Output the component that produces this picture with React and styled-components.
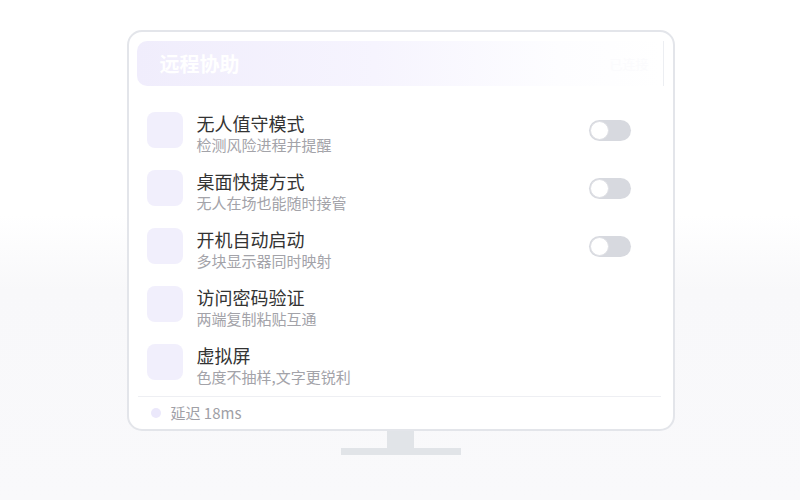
import React from 'react';
import styled, { createGlobalStyle } from 'styled-components';

const Global = createGlobalStyle`
    html, body {
        margin: 0;
        padding: 0;
    }
    body {
        width: 800px;
        height: 500px;
        overflow: hidden;
        font-family: "Noto Sans CJK SC", "Noto Sans", sans-serif;
        background: linear-gradient(180deg, #ffffff 0px, #ffffff 215px, #f8f8fa 290px, #f9f9fb 500px);
    }
`

const Stage = styled.div`
    display: flex;
    flex-direction: column;
    align-items: center;
    padding-top: 30px;
    padding-left: 1px;
`

const Screen = styled.div`
    box-sizing: border-box;
    width: 548px;
    height: 401px;
    border: 2px solid #e3e5ea;
    border-radius: 15px;
    background: #ffffff;
    padding: 9px 9px 0 8px;
    display: flex;
    flex-direction: column;
`

const Header = styled.div`
    height: 45px;
    border-radius: 10px 0 0 10px;
    background: linear-gradient(90deg, #f0edfc 0%, #f6f4fe 45%, #fdfdff 80%, #ffffff 100%);
    border-right: 1px solid #eceef2;
    display: flex;
    align-items: center;
    justify-content: space-between;
    padding: 0 14px 0 23px;
`

const Titulo = styled.span`
    color: #ffffff;
    font-size: 20px;
    font-weight: 700;
`

const Status = styled.span`
    color: #fbfbfd;
    font-size: 13px;
`

const Lista = styled.div`
    display: flex;
    flex-direction: column;
    padding-top: 15px;
`

const Linha = styled.div`
    height: 58px;
    display: flex;
    align-items: center;
    padding: 0 33px 0 10px;
`

const Icone = styled.div`
    width: 36px;
    height: 36px;
    border-radius: 8px;
    background: #f1effc;
    flex-shrink: 0;
`

const Textos = styled.div`
    flex: 1;
    display: flex;
    flex-direction: column;
    margin-left: 14px;
    margin-top: 5px;
`

const Nome = styled.span`
    font-size: 18px;
    line-height: 24px;
    color: #333333;
`

const Descricao = styled.span`
    font-size: 15px;
    line-height: 20px;
    color: #a3a3a9;
`

const Trilho = styled.div`
    box-sizing: border-box;
    width: 42px;
    height: 21px;
    border-radius: 11px;
    background: #d7d9df;
    padding: 1px;
    display: flex;
    align-items: center;
`

const Bolinha = styled.div`
    box-sizing: border-box;
    width: 19px;
    height: 19px;
    border-radius: 50%;
    background: #ffffff;
    border: 1.5px solid #dfe0e5;
`

const Divisor = styled.div`
    height: 1px;
    background: #eeeff3;
    margin: 5px 3px 0 1px;
`

const Rodape = styled.div`
    height: 31px;
    display: flex;
    align-items: center;
    padding-left: 14px;
    gap: 10px;
`

const Ponto = styled.div`
    width: 10px;
    height: 10px;
    border-radius: 50%;
    background: #ebe8fb;
`

const Latencia = styled.span`
    font-size: 15px;
    color: #a0a0a6;
`

const Pescoco = styled.div`
    width: 27px;
    height: 17px;
    background: #e1e4e8;
`

const Base = styled.div`
    width: 120px;
    height: 7px;
    background: #e1e4e8;
`

const itens = [
    { nome: '无人值守模式', desc: '检测风险进程并提醒', toggle: true },
    { nome: '桌面快捷方式', desc: '无人在场也能随时接管', toggle: true },
    { nome: '开机自动启动', desc: '多块显示器同时映射', toggle: true },
    { nome: '访问密码验证', desc: '两端复制粘贴互通', toggle: false },
    { nome: '虚拟屏', desc: '色度不抽样,文字更锐利', toggle: false },
]

export default function App() {
    return (
        <Stage>
            <Global />
            <Screen>
                <Header>
                    <Titulo>远程协助</Titulo>
                    <Status>已连接</Status>
                </Header>
                <Lista>
                    {itens.map((item) => (
                        <Linha key={item.nome}>
                            <Icone />
                            <Textos>
                                <Nome>{item.nome}</Nome>
                                <Descricao>{item.desc}</Descricao>
                            </Textos>
                            {item.toggle && (
                                <Trilho>
                                    <Bolinha />
                                </Trilho>
                            )}
                        </Linha>
                    ))}
                </Lista>
                <Divisor />
                <Rodape>
                    <Ponto />
                    <Latencia>延迟 18ms</Latencia>
                </Rodape>
            </Screen>
            <Pescoco />
            <Base />
        </Stage>
    )
}
